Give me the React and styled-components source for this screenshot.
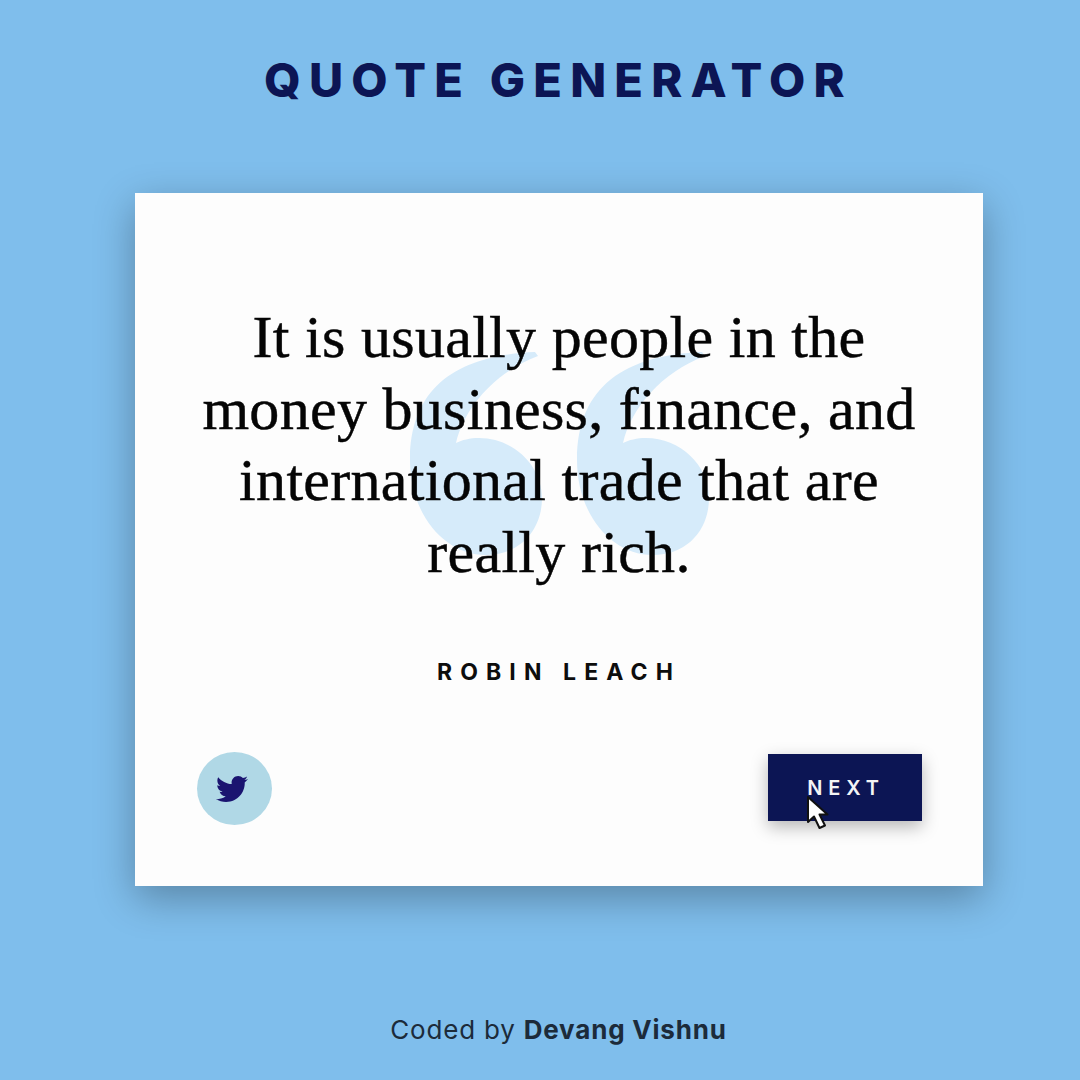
import React from 'react'
import styled, { createGlobalStyle } from 'styled-components'
import { FaTwitter } from 'react-icons/fa'

const GlobalStyle = createGlobalStyle`
   html, body {
      margin: 0;
      padding: 0;
      height: 100%;
      background: #7fbeec;
   }
`
const Page = styled.div`
   height: 1080px;
   box-sizing: border-box;
   overflow: hidden;
   padding: 51px 0 0 37px;
   display: flex;
   flex-direction: column;
   align-items: center;
   font-family: Inter, "Liberation Sans", sans-serif;
`
const Title = styled.h1`
   margin: 0;
   font-size: 47px;
   line-height: 58px;
   font-weight: 800;
   letter-spacing: 8.2px;
   color: #0c1554;
`
const Card = styled.main`
   position: relative;
   box-sizing: border-box;
   width: 848px;
   height: 693px;
   margin-top: 84px;
   padding: 109px 61px 61px 62px;
   display: flex;
   flex-direction: column;
   align-items: center;
   background: #fdfdfd;
   box-shadow: 0 12px 38px rgba(0, 0, 0, 0.3);
`
const QuoteMark = styled.svg`
   position: absolute;
   left: 275px;
   top: 157px;
   width: 303px;
   height: 210px;
   fill: #d6ebfa;
`
const Quote = styled.p`
   position: relative;
   margin: 0;
   font-family: "Liberation Serif", serif;
   font-size: 60px;
   line-height: 71.5px;
   letter-spacing: 0.3px;
   text-align: center;
   color: #050505;
   -webkit-text-stroke: 0.45px #050505;
`
const Author = styled.p`
   position: relative;
   margin: 69px 0 0;
   font-size: 23px;
   line-height: 30px;
   font-weight: 700;
   letter-spacing: 8.1px;
   color: #0d0d0d;
`
const Actions = styled.div`
   align-self: stretch;
   margin-top: auto;
   display: flex;
   justify-content: space-between;
   align-items: flex-start;
`
const TweetButton = styled.a`
   width: 75px;
   height: 73px;
   padding-right: 5px;
   box-sizing: border-box;
   border-radius: 50%;
   display: flex;
   align-items: center;
   justify-content: center;
   background: #b0d8e6;
   color: #1a1470;
   font-size: 32px;
`
const NextButton = styled.button`
   position: relative;
   width: 154px;
   height: 67px;
   margin-top: 2px;
   padding: 0 0 0 3px;
   border: none;
   background: #0c1554;
   color: #f4f4f4;
   font-family: inherit;
   font-size: 20px;
   font-weight: 600;
   letter-spacing: 5.9px;
   box-shadow: 0 6px 16px rgba(0, 0, 0, 0.28);
`
const Cursor = styled.svg`
   position: absolute;
   left: 37px;
   top: 40px;
   width: 25px;
   height: 37px;
`
const Footer = styled.footer`
   margin-top: 127px;
   font-size: 26px;
   line-height: 34px;
   letter-spacing: 0.8px;
   color: #1c2b3a;
`
const FooterName = styled.strong`
   font-weight: 700;
`

const App = () => {
   return (
      <Page>
         <GlobalStyle />
         <Title>QUOTE GENERATOR</Title>
         <Card>
            <QuoteMark viewBox="0 0 303 210">
               <path d="M125 2C50 5 0 35 0 110C0 165 35 205 76 205C110 205 132 180 132 148C132 115 103 88 69 88C60 88 52 90 46 93C54 58 85 22 128 6Z" />
               <path d="M292 2C217 5 167 35 167 110C167 165 202 205 243 205C277 205 299 180 299 148C299 115 270 88 236 88C227 88 219 90 213 93C221 58 252 22 295 6Z" />
            </QuoteMark>
            <Quote>
               It is usually people in the<br />
               money business, finance, and<br />
               international trade that are<br />
               really rich.
            </Quote>
            <Author>ROBIN LEACH</Author>
            <Actions>
               <TweetButton>
                  <FaTwitter />
               </TweetButton>
               <NextButton>
                  NEXT
                  <Cursor viewBox="0 0 25 37">
                     <path d="M3 3L3 28L9 22.5L14.5 34L20 31.5L14.5 20.5L22.5 20.5Z" fill="#fff" stroke="#111" strokeWidth="2" strokeLinejoin="round" />
                  </Cursor>
               </NextButton>
            </Actions>
         </Card>
         <Footer>
            Coded by <FooterName>Devang Vishnu</FooterName>
         </Footer>
      </Page>
   )
}

export default App
